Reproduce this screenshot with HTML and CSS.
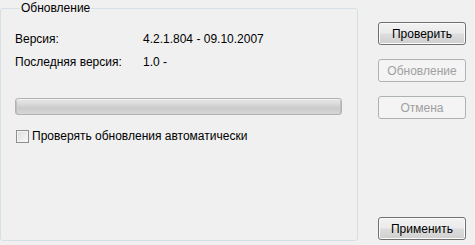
FILE: index.html
```html
<!DOCTYPE html>
<html lang="ru">
<head>
<meta charset="utf-8">
<link rel="stylesheet" href="styles.css">
</head>
<body>
<div class="page">
  <fieldset class="group">
    <legend class="group-title">Обновление</legend>
    <div class="info">
      <div class="info-row"><span class="info-label">Версия:</span><span class="info-value">4.2.1.804 - 09.10.2007</span></div>
      <div class="info-row"><span class="info-label">Последняя версия:</span><span class="info-value">1.0 -</span></div>
    </div>
    <div class="progress"></div>
    <label class="check"><span class="check-box"></span><span class="check-text">Проверять обновления автоматически</span></label>
  </fieldset>
  <div class="actions">
    <button class="btn">Проверить</button>
    <button class="btn" disabled>Обновление</button>
    <button class="btn" disabled>Отмена</button>
    <button class="btn btn-apply">Применить</button>
  </div>
</div>
</body>
</html>
```
FILE: styles.css
```css
* { box-sizing: border-box; }
html, body { margin: 0; padding: 0; }
body {
  background: #f0f0f0;
  font-family: "Liberation Sans", Arial, sans-serif;
  font-size: 12px;
  color: #000;
  width: 475px;
  height: 245px;
  overflow: hidden;
}
.page {
  display: flex;
  height: 245px;
}
.group {
  margin: 0;
  width: 358px;
  height: 241px;
  border: 1px solid #d5dfe5;
  border-radius: 3px;
  padding: 0 0 0 14px;
  min-width: 0;
}
.group-title {
  padding: 0 1px;
  margin-left: 5px;
  line-height: 16px;
  height: 16px;
  color: #000;
}
.info {
  display: flex;
  flex-direction: column;
  gap: 7px;
  padding-top: 15px;
}
.info-row {
  display: flex;
  line-height: 16px;
}
.info-label { width: 128px; }
.progress {
  margin-top: 28px;
  width: 327px;
  height: 17px;
  border: 1px solid #b2b2b2;
  border-radius: 3px;
  background: linear-gradient(#e6e6e6 0%, #dcdcdc 30%, #cbcbcb 60%, #d6d6d6 100%);
  box-shadow: inset 0 1px 0 #f2f2f2, inset 1px 0 0 #c0c0c0, inset -1px 0 0 #c0c0c0;
}
.check {
  display: flex;
  align-items: center;
  margin-top: 13px;
  margin-left: 1px;
  line-height: 16px;
}
.check-box {
  width: 13px;
  height: 13px;
  border: 1px solid #8f8f8f;
  background: linear-gradient(135deg, #dcdcdc, #fafafa);
  box-shadow: inset 0 0 0 1px #f4f4f4;
  margin-right: 3px;
}
.actions {
  display: flex;
  flex-direction: column;
  gap: 14px;
  padding: 22px 0 5px 20px;
}
.btn {
  width: 88px;
  height: 23px;
  font: inherit;
  color: #000;
  border: 1px solid #707070;
  border-radius: 3px;
  background: linear-gradient(#f2f2f2 0%, #ebebeb 48%, #dddddd 52%, #cfcfcf 100%);
  box-shadow: inset 0 0 0 1px #fbfbfb;
  padding: 0;
}
.btn:disabled {
  color: #a0a0a0;
  border-color: #adb2b5;
  background: #f4f4f4;
  box-shadow: none;
}
.btn-apply { margin-top: auto; }
```
